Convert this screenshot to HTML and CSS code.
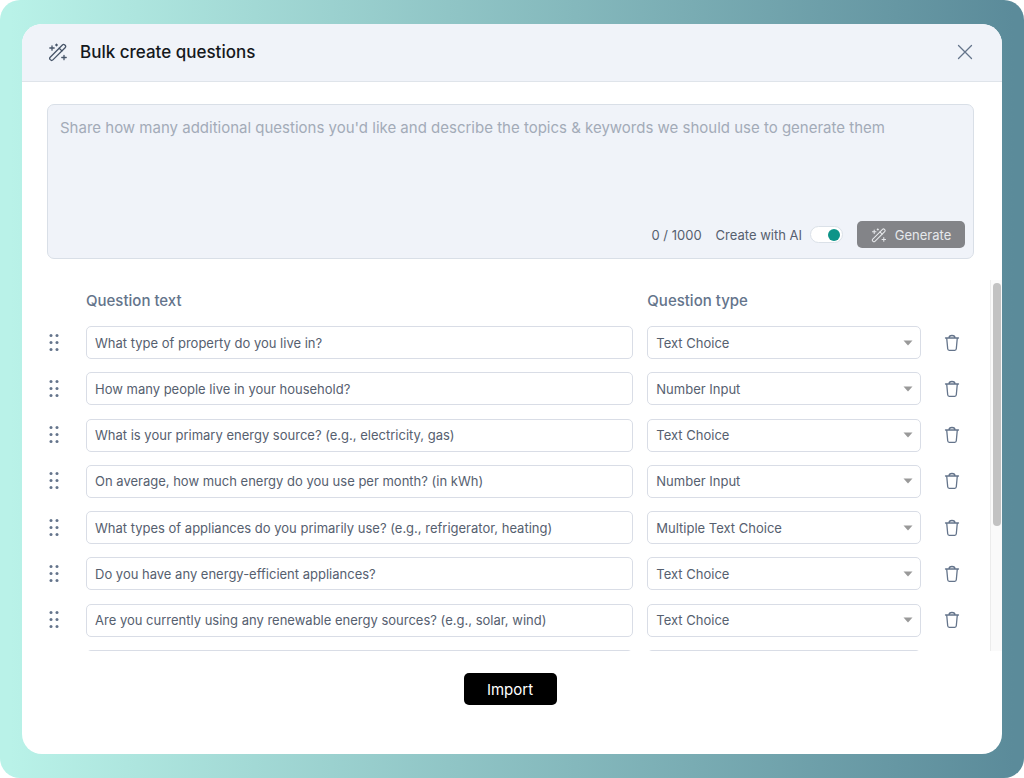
FILE: index.html
```
<!DOCTYPE html>
<html lang="en">
<head>
    <meta charset="UTF-8">
    <meta name="viewport" content="width=device-width, initial-scale=1">
    <title>Bulk create questions</title>
    <link rel="stylesheet" href="styles.css">
</head>
<body>

    <!-- Shared icons -->
    <svg class="sprite" aria-hidden="true">
        <symbol id="icon-wand" viewBox="0 0 20 20">
            <path d="M2.2 15.2 14.4 3a1.7 1.7 0 0 1 2.4 0l.3.3a1.7 1.7 0 0 1 0 2.4L4.9 17.9a1.7 1.7 0 0 1-2.4 0l-.3-.3a1.7 1.7 0 0 1 0-2.4z"/>
            <path d="M11.2 6.2l2.7 2.7"/>
            <path d="M4 3.8v4.4M1.8 6h4.4M16 13.3v4.4M13.8 15.5h4.400M8.500 2.200v1.600M7.700 3h1.600"/>
        </symbol>
        <symbol id="icon-trash" viewBox="0 0 16 18">
            <path d="M1.5 4h13M5 4c0-1.700 1-2.500 3-2.500s3 .8 3 2.500M2.700 4l1 10.800c.1 1 .6 1.500 1.500 1.500h5.600c.9 0 1.400-.5 1.500-1.500l1-10.800"/>
        </symbol>
        <symbol id="icon-grip" viewBox="0 0 12 20">
            <circle cx="2" cy="2.500" r="1.500"/><circle cx="8" cy="2.500" r="1.500"/>
            <circle cx="2" cy="9.500" r="1.500"/><circle cx="8" cy="9.500" r="1.500"/>
            <circle cx="2" cy="16.500" r="1.500"/><circle cx="8" cy="16.500" r="1.500"/>
        </symbol>
        <symbol id="icon-caret" viewBox="0 0 10 6">
            <path d="M.5.5h9L5 5.500z"/>
        </symbol>
    </svg>

    <div class="stage">
        <main class="dialog">
            <header class="dialog-header">
                <svg class="icon-wand" aria-hidden="true"><use href="#icon-wand"/></svg>
                <h1>Bulk create questions</h1>
                <button class="close-button" type="button" aria-label="Close">
                    <svg viewBox="0 0 16 16" aria-hidden="true"><path d="M1.500 1.500l13 13M14.500 1.500l-13 13"/></svg>
                </button>
            </header>

            <div class="prompt">
                <textarea class="prompt-text" aria-label="Prompt" maxlength="1000" placeholder="Share how many additional questions you'd like and describe the topics &amp; keywords we should use to generate them"></textarea>
                <div class="prompt-bar">
                    <span>0 / 1000</span>
                    <label class="ai-toggle">Create with AI <input type="checkbox" checked></label>
                    <button class="generate-button" type="button">
                        <svg class="icon-wand" aria-hidden="true"><use href="#icon-wand"/></svg>
                        Generate
                    </button>
                </div>
            </div>

            <div class="questions">
                <div class="question-list">
                    <div class="row head">
                        <span></span>
                        <span id="col-text">Question text</span>
                        <span id="col-type">Question type</span>
                    </div>
                    <div class="rows" id="rows"></div>
                </div>
                <div class="scroll-track"><div class="scroll-thumb"></div></div>
            </div>

            <footer class="dialog-footer">
                <button class="import-button" type="button">Import</button>
            </footer>
        </main>
    </div>

<script src="script.js"></script>
</body>
</html>
```
FILE: styles.css
```
* {
    box-sizing: border-box;
}
body {
    margin: 0;
    background: #fff;
    color: #56606f;
    font-family: Inter, "Liberation Sans", sans-serif;
    font-size: 13px;
}
button, input, select, textarea {
    font: inherit;
    color: inherit;
}
button {
    padding: 0;
    border: none;
    background: none;
    cursor: pointer;
}
.sprite {
    display: none;
}

/* Dialog on the gradient */
.stage {
    display: flex;
    height: 100vh;
    padding: 24px 22px;
    border-radius: 20px;
    background: linear-gradient(90deg, #b9f2e8 1%, #5b8b9a 99%);
}
.dialog {
    display: flex;
    flex: 1;
    flex-direction: column;
    min-width: 0;
    overflow: hidden;
    border-radius: 20px;
    background: #fff;
}
.dialog-header {
    display: flex;
    align-items: center;
    gap: 12px;
    height: 58px;
    padding: 0 29px 2px 26px;
    border-bottom: 1px solid #dfe4ea;
    background: #f0f3f9;
}
.dialog-header h1 {
    flex: 1;
    margin: 0;
    color: #15181c;
    font-size: 17px;
    font-weight: 500;
}
.icon-wand {
    width: 20px;
    height: 20px;
    fill: none;
    stroke: #475569;
    stroke-width: 1.3;
    stroke-linecap: round;
}
.close-button svg {
    display: block;
    width: 16px;
    height: 16px;
    fill: none;
    stroke: #64748b;
    stroke-width: 1.3;
    stroke-linecap: round;
}

/* Prompt box */
.prompt {
    display: flex;
    flex-direction: column;
    height: 155px;
    margin: 22px 28px 0 25px;
    padding: 11px 8px 10px 12px;
    border: 1px solid #d9dfe7;
    border-radius: 7px;
    background: #f0f3f9;
}
.prompt-text {
    flex: 1;
    padding: 0;
    border: none;
    outline: none;
    resize: none;
    background: none;
    font-size: 15px;
    line-height: 24px;
}
.prompt-text::placeholder {
    color: #a3abb8;
}
.prompt-bar {
    display: flex;
    align-items: center;
    justify-content: flex-end;
    gap: 14px;
}
.ai-toggle {
    display: flex;
    align-items: center;
    gap: 8px;
}
.ai-toggle input {
    display: flex;
    align-items: center;
    appearance: none;
    width: 33px;
    height: 17px;
    margin: 0;
    padding: 0 2px;
    border: 1px solid #dbe1e8;
    border-radius: 9px;
    background: #fff;
}
.ai-toggle input::before {
    content: "";
    width: 12px;
    height: 12px;
    border-radius: 50%;
    background: #94a3b8;
}
.ai-toggle input:checked::before {
    margin-left: auto;
    background: #0d9488;
}
.generate-button {
    display: flex;
    align-items: center;
    justify-content: center;
    gap: 8px;
    width: 108px;
    height: 27px;
    border-radius: 5px;
    background: #838488;
    color: #e6e8eb;
}
.generate-button .icon-wand {
    width: 16px;
    height: 16px;
    stroke: #e6e8eb;
}

/* Question list */
.questions {
    display: flex;
    flex: 1;
    min-height: 0;
    margin-top: 21px;
    overflow: hidden;
}
.question-list {
    flex: 1;
    padding: 0 21px 0 25px;
}
.row {
    display: grid;
    grid-template-columns: 25px 2fr 1fr 34px;
    gap: 14px;
    align-items: center;
}
.head {
    height: 46px;
    padding-bottom: 6px;
    color: #64748b;
    font-size: 15px;
    font-weight: 500;
}
.rows {
    display: grid;
    align-content: space-between;
    height: 357px;
}
.grip {
    width: 25px;
    height: 20px;
    padding-left: 2px;
    cursor: grab;
}
.grip svg {
    display: block;
    width: 12px;
    height: 20px;
    fill: #64748b;
}
.field {
    width: 100%;
    height: 33px;
    padding: 0 8px;
    border: 1px solid #d9dde6;
    border-radius: 5px;
    background: #fff;
    outline: none;
}
.select-wrap {
    display: grid;
    align-items: center;
}
.select-wrap > * {
    grid-area: 1 / 1;
}
.select-wrap .field {
    appearance: none;
}
.select-wrap svg {
    justify-self: end;
    width: 10px;
    height: 6px;
    margin-right: 8px;
    fill: #999;
    pointer-events: none;
}
.delete-button svg {
    display: block;
    width: 16px;
    height: 18px;
    margin: 0 auto;
    fill: none;
    stroke: #64748b;
    stroke-width: 1.3;
    stroke-linecap: round;
    stroke-linejoin: round;
}
.scroll-track {
    width: 12px;
    padding: 3px 1px 0 2px;
    border-left: 1px solid #ececec;
    background: #fafafa;
}
.scroll-thumb {
    height: 66%;
    border-radius: 4px;
    background: #c2c2c2;
}

.dialog-footer {
    display: flex;
    justify-content: center;
    padding: 22px 4px 49px 0;
}
.import-button {
    width: 93px;
    height: 32px;
    border-radius: 5px;
    background: #000;
    color: #fff;
    font-size: 15px;
}
```
FILE: script.js
```
var types = ["Text Choice", "Number Input", "Multiple Text Choice"];

var questions = [
    ["What type of property do you live in?", "Text Choice"],
    ["How many people live in your household?", "Number Input"],
    ["What is your primary energy source? (e.g., electricity, gas)", "Text Choice"],
    ["On average, how much energy do you use per month? (in kWh)", "Number Input"],
    ["What types of appliances do you primarily use? (e.g., refrigerator, heating)", "Multiple Text Choice"],
    ["Do you have any energy-efficient appliances?", "Text Choice"],
    ["Are you currently using any renewable energy sources? (e.g., solar, wind)", "Text Choice"],
    ["", "Text Choice"]
];

function icon(name) {
    return '<svg aria-hidden="true"><use href="#icon-' + name + '"/></svg>';
}

// Build one editable row per question
document.getElementById("rows").innerHTML = questions.map(function (q) {
    var options = types.map(function (t) {
        return "<option" + (t === q[1] ? " selected" : "") + ">" + t + "</option>";
    }).join("");

    return '<div class="row">' +
        '<button class="grip" type="button" aria-label="Reorder">' + icon("grip") + "</button>" +
        '<input class="field" type="text" aria-labelledby="col-text" value="' + q[0] + '">' +
        '<div class="select-wrap"><select class="field" aria-labelledby="col-type">' + options + "</select>" + icon("caret") + "</div>" +
        '<button class="delete-button" type="button" aria-label="Delete">' + icon("trash") + "</button>" +
        "</div>";
}).join("");
```
